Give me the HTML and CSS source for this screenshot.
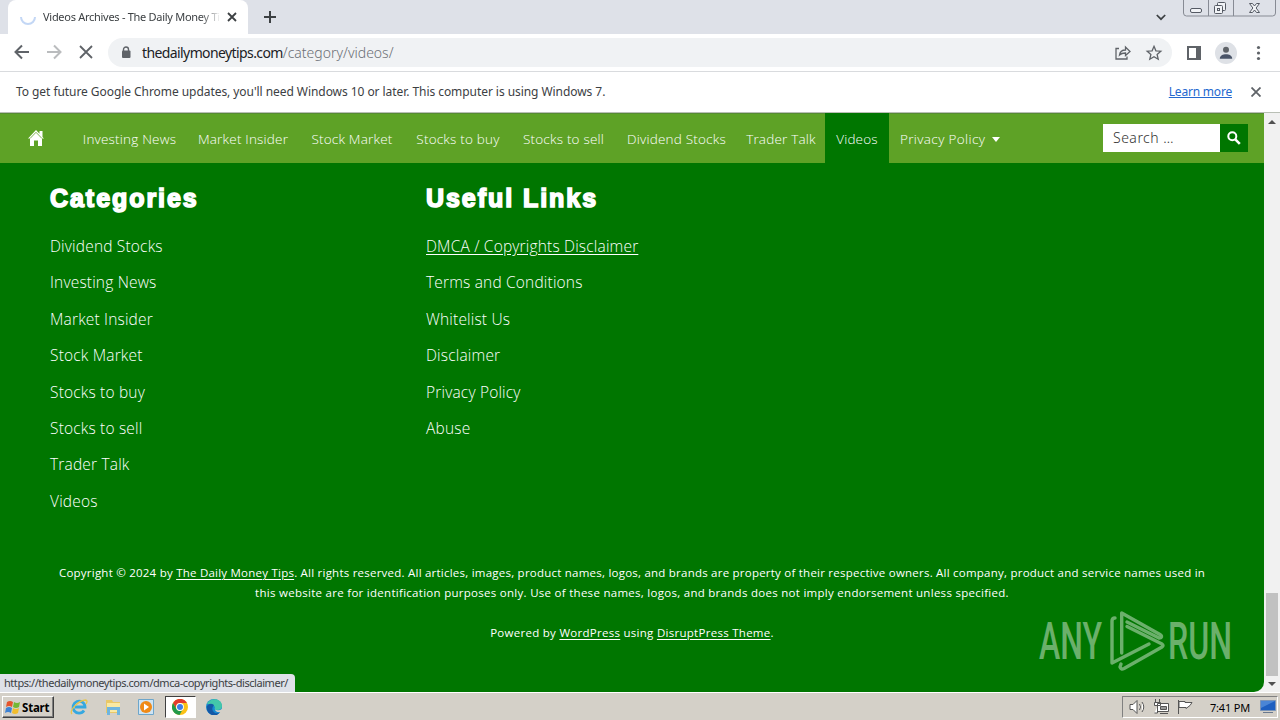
FILE: index.html
```html
<!DOCTYPE html>
<html lang="en">
<head>
    <meta charset="UTF-8">
    <meta name="viewport" content="width=device-width, initial-scale=1.0">
    <title>Videos Archives - The Daily Money Tips</title>
    <link rel="stylesheet" href="styles.css">
</head>
<body>
    <div class="tabstrip">
        <div class="tab">
            <svg class="spinner" width="16" height="16" viewBox="0 0 16 16"><path d="M1 8a7 7 0 0 0 14 0" fill="none" stroke="#c3d7f5" stroke-width="2"/></svg>
            <span class="tab-title">Videos Archives - The Daily Money Ti</span>
            <svg class="tab-close" width="10" height="10" viewBox="0 0 10 10"><path d="M1 1l8 8M9 1l-8 8" stroke="#3c4043" stroke-width="1.8"/></svg>
        </div>
        <svg class="new-tab" width="12" height="12" viewBox="0 0 12 12"><path d="M6 0v12M0 6h12" stroke="#3c4043" stroke-width="2"/></svg>
        <svg class="tab-search" width="10" height="7" viewBox="0 0 10 7"><path d="M.8 1L5 5.2 9.2 1" fill="none" stroke="#3c4043" stroke-width="1.7"/></svg>
        <svg class="window-buttons" width="94" height="17" viewBox="0 0 94 17">
            <path d="M.5 0v13a3 3 0 0 0 3 3h86a3 3 0 0 0 3-3V0M25.5 0v16M50.5 0v16" fill="none" stroke="#878b94"/>
            <g fill="#f1f3f6" stroke="#555a64">
                <rect x="7.5" y="8.5" width="11" height="4" rx="1.5"/>
                <rect x="34.5" y="2.5" width="8" height="8" rx="1"/>
                <rect x="31.5" y="5.5" width="8" height="8" rx="1"/>
                <rect x="34.5" y="8.5" width="2" height="2"/>
                <path d="M66.5 3.5h3l2 2.500 2-2.500h3l-3.400 4.500 3.400 4.500h-3l-2-2.500-2 2.500h-3l3.400-4.500z"/>
            </g>
        </svg>
    </div>

    <div class="toolbar">
        <svg width="100" height="36" viewBox="0 0 100 36" fill="none" stroke-width="2">
            <path d="M29 17H16M22 10.500L15.500 17l6.500 6.500" stroke="#5f6368"/>
            <path d="M47 17h13M54 10.500l6.500 6.500-6.500 6.500" stroke="#babcbe"/>
            <path d="M80 11l12 12M92 11L80 23" stroke="#5f6368" stroke-width="1.8"/>
        </svg>
        <div class="address">
            <svg class="lock" width="10" height="13" viewBox="0 0 10 13"><path d="M2.500 5V3.500a2.500 2.500 0 0 1 5 0V5" fill="none" stroke="#5f6368" stroke-width="1.4"/><rect x="1" y="4.500" width="8.500" height="7.500" rx="1" fill="#5f6368"/></svg>
            <span class="url"><b>thedailymoneytips.com</b>/category/videos/</span>
            <svg class="address-icons" width="52" height="20" viewBox="0 0 52 20" fill="none" stroke="#5f6368" stroke-width="1.3">
                <path d="M5 5.500H2V16h11v-2.500M5.500 12c.6-4 3-5 6-5V4l4.500 4.500-4.500 4V10c-3 0-4.500.5-6 2z"/>
                <path d="M40 3.300l1.900 4.500 4.900.4-3.700 3.200 1.100 4.800-4.200-2.500-4.200 2.500 1.100-4.800-3.700-3.200 4.900-.4z"/>
            </svg>
        </div>
        <svg class="toolbar-icons" width="84" height="24" viewBox="0 0 84 24" fill="#5f6368">
            <path d="M1 5h14v14H1zM3 7v10h7V7z" fill-rule="evenodd"/>
            <circle cx="40" cy="12" r="11" fill="#dee1e6"/><circle cx="40" cy="8.800" r="3"/><path d="M33.800 17.700c0-5.800 12.400-5.800 12.400 0z" fill="#4a5468"/>
            <circle cx="72.500" cy="6.500" r="1.600"/><circle cx="72.500" cy="12" r="1.600"/><circle cx="72.500" cy="17.500" r="1.600"/>
        </svg>
    </div>

    <div class="infobar">
        <span class="infobar-text">To get future Google Chrome updates, you'll need Windows 10 or later. This computer is using Windows 7.</span>
        <a class="learn-more">Learn more</a>
        <svg width="10" height="10" viewBox="0 0 10 10"><path d="M.5.5l9 9M9.500.5l-9 9" stroke="#5f6368" stroke-width="1.8"/></svg>
    </div>

    <div class="viewport">
        <div class="page">
            <div class="navbar">
                <svg class="home" width="18" height="18" viewBox="0 0 18 18"><path d="M1 9.500L9 1l3.500 3.700V2h3v6l1.500 1.500h-2V17h-4v-5.500H7V17H3V9.500z" fill="#fff"/><path d="M3 9.500l6-6.200 6 6.200" fill="none" stroke="#5ea226" stroke-width=".8"/></svg>
                <ul class="menu">
                    <li>Investing News</li>
                    <li>Market Insider</li>
                    <li>Stock Market</li>
                    <li>Stocks to buy</li>
                    <li>Stocks to sell</li>
                    <li>Dividend Stocks</li>
                    <li>Trader Talk</li>
                    <li class="active">Videos</li>
                    <li class="has-children">Privacy Policy</li>
                </ul>
                <div class="search">
                    <span class="search-field">Search …</span>
                    <span class="search-button"><svg width="14" height="14" viewBox="0 0 14 14"><circle cx="5.300" cy="5.300" r="4" fill="none" stroke="#fff" stroke-width="2"/><path d="M8.300 8.300l4.500 4.500" stroke="#fff" stroke-width="2.600"/></svg></span>
                </div>
            </div>

            <div class="widgets">
                <div class="widget">
                    <h3>Categories</h3>
                    <ul>
                        <li>Dividend Stocks</li>
                        <li>Investing News</li>
                        <li>Market Insider</li>
                        <li>Stock Market</li>
                        <li>Stocks to buy</li>
                        <li>Stocks to sell</li>
                        <li>Trader Talk</li>
                        <li>Videos</li>
                    </ul>
                </div>
                <div class="widget">
                    <h3>Useful Links</h3>
                    <ul>
                        <li><u>DMCA / Copyrights Disclaimer</u></li>
                        <li>Terms and Conditions</li>
                        <li>Whitelist Us</li>
                        <li>Disclaimer</li>
                        <li>Privacy Policy</li>
                        <li>Abuse</li>
                    </ul>
                </div>
            </div>

            <div class="copyright">
                <p class="line-one">Copyright © 2024 by <u>The Daily Money Tips</u>. All rights reserved. All articles, images, product names, logos, and brands are property of their respective owners. All company, product and service names used in</p>
                <p>this website are for identification purposes only. Use of these names, logos, and brands does not imply endorsement unless specified.</p>
                <p class="powered">Powered by <u>WordPress</u> using <u>DisruptPress Theme</u>.</p>
            </div>
        </div>

        <div class="scrollbar">
            <svg width="8" height="4" viewBox="0 0 8 4"><path d="M0 4l4-4 4 4z" fill="#505050"/></svg>
            <div class="thumb"></div>
            <svg width="8" height="4" viewBox="0 0 8 4"><path d="M0 0l4 4 4-4z" fill="#505050"/></svg>
        </div>

        <div class="status">https://thedailymoneytips.com/dmca-copyrights-disclaimer/</div>

        <svg class="watermark" width="210" height="64" viewBox="0 0 210 64">
            <g class="watermark-text">
                <text x="2" y="50" textLength="63" lengthAdjust="spacingAndGlyphs">ANY</text>
                <text x="131" y="50" textLength="64" lengthAdjust="spacingAndGlyphs">RUN</text>
            </g>
            <g fill="none" stroke="#6bb06b" stroke-width="3.4" stroke-linejoin="round" stroke-linecap="round">
                <path d="M84.700 44V4L123 25.500q2.500 1.500 1 3l-2 .5L90 13"/>
                <path d="M78 9q-3 0-3 3V54l37-19"/>
                <path d="M84 55l-1 3q1 3 4 1.500L125 38q2-1.500 0-3L90 17.500"/>
            </g>
        </svg>
    </div>

    <div class="taskbar">
        <div class="start">
            <svg width="16" height="15" viewBox="0 0 16 15"><path d="M2 2q3-2 6 0L7 7Q4 5 1 7z" fill="#e5542b"/><path d="M9 2q3 2 6 0l-1 5q-3 2-6 0z" fill="#74b834"/><path d="M1 8q3-2 6 0l-1 5q-3-2-6 0z" fill="#3d82d4"/><path d="M8 8q3 2 6 0l-1 5q-3 2-6 0z" fill="#f2bd2c"/></svg>
            Start
        </div>
        <div class="pinned">
            <span><svg width="18" height="18" viewBox="0 0 18 18" fill="none"><path d="M14 12.500A6 6 0 1 1 15 9H5" stroke="#35a8e0" stroke-width="2.800"/><path d="M2 16C-1 13 8 2 16 2q2 1 0 4" stroke="#e8c54a" stroke-width="1.300"/></svg></span>
            <span><svg width="18" height="18" viewBox="0 0 18 18"><path d="M2 2h6l1 2h7v11H2z" fill="#e9c868"/><path d="M3 5h13v9H3z" fill="#f9e9a3"/><path d="M3 17V9h13v8h-3v-5H6v5z" fill="#6fb5df"/></svg></span>
            <span><svg width="18" height="18" viewBox="0 0 18 18"><path d="M1.500 1.500h15v15h-15z" fill="#cfe4f3" stroke="#6da6cb"/><circle cx="9" cy="9" r="6" fill="#f08a17"/><path d="M7 5.500l5 3.500-5 3.500z" fill="#fff"/></svg></span>
            <span class="running"><svg width="16" height="16" viewBox="0 0 16 16"><circle cx="8" cy="8" r="8" fill="#fbc116"/><path d="M1 4a8 8 0 0 1 14 0H8a4 4 0 0 0-3.500 6z" fill="#e33b2e"/><path d="M1 4a8 8 0 0 0 6.500 12L11 10q-3 4-6.500 0z" fill="#229a4b"/><circle cx="8" cy="8" r="3.900" fill="#fff"/><circle cx="8" cy="8" r="3" fill="#3e7de8"/></svg></span>
            <span><svg width="16" height="16" viewBox="0 0 16 16"><circle cx="8" cy="8" r="8" fill="#1689d1"/><path d="M1 5C4-2 16-1 16 7q0 4-5 4-3 0-2-2Q9 5 1 5" fill="#43c7aa"/><path d="M1 7Q4 3 8 6q-4 5 1 8 3 1 5-1-4 6-10 2Q0 12 1 7" fill="#1458a6"/><path d="M9 9q-1 3 5 2l2-1v3q-8 1-7-4" fill="#d4d0c8"/></svg></span>
        </div>
        <div class="tray">
            <svg width="70" height="18" viewBox="0 0 70 18" fill="#fff" stroke="#555">
                <path d="M2 6.500h3l4-4v13l-4-4H2zM11.500 6q2 3 0 6M14 4q3.500 5 0 10"/>
                <path d="M29.500 5.500h11v8h-11zM32 15.500h8M27.500 1v4M31.500 1v4M26.500 4.500h6v3h-6zM29.500 8v7h-3"/>
                <path d="M32.500 8.500h6v3h-6z" fill="#999"/>
                <path d="M50.500 2v14M51 3.500h6v1h7l-2 3-4 3v-1h-7z"/>
            </svg>
            <span class="clock">7:41 PM</span>
            <svg width="16" height="14" viewBox="0 0 16 14"><path d="M.5.5h15v10H.5z" fill="#1e5fc0" stroke="#7a94b8"/><path d="M1 1h14L1 8z" fill="#4a85d5"/><path d="M3 12h10v1H3z" fill="#69788e"/></svg>
        </div>
    </div>
</body>
</html>
```
FILE: styles.css
```css
* { box-sizing: border-box; }
body { margin: 0; width: 1280px; height: 720px; overflow: hidden; display: flex; flex-direction: column; background: #fff; font-family: "Noto Sans", "Open Sans", sans-serif; font-size: 12px; color: #3c4043; white-space: nowrap; }
ul, p, h3 { margin: 0; padding: 0; list-style: none; }
svg { flex: none; display: block; }

/* browser */
.tabstrip { height: 34px; flex: none; display: flex; align-items: center; background: #dee1e8; }
.tab { width: 240px; height: 34px; margin-left: 8px; padding: 0 11px 0 12px; display: flex; align-items: center; background: #fff; border-radius: 8px 8px 0 0; }
.tab-title { width: 176px; margin-left: 7px; padding-bottom: 2px; font-size: 11px; letter-spacing: -0.28px; -webkit-mask-image: linear-gradient(90deg, #000 158px, transparent 178px); mask-image: linear-gradient(90deg, #000 158px, transparent 178px); }
.tab-close { margin-left: auto; }
.new-tab { margin-left: 16px; }
.tab-search { margin-left: auto; margin-right: 17px; }
.window-buttons { align-self: flex-start; margin-right: 3px; }
.toolbar { height: 38px; flex: none; display: flex; align-items: center; border-bottom: 1px solid #d9dbde; }
.address { width: 1064px; height: 29px; margin-left: 8px; padding: 0 6px 0 13px; display: flex; align-items: center; border-radius: 15px; background: #f0f2f4; }
.url { margin-left: 11px; font-size: 14px; color: #6b6f74; font-weight: 300; }
.url b { font-weight: 400; color: #202124; letter-spacing: -0.6px; }
.address-icons { margin-left: auto; }
.toolbar-icons { margin-left: 14px; }
.infobar { height: 41px; flex: none; padding: 0 19px 0 16px; display: flex; align-items: center; border-bottom: 1px solid #b9bfb5; }
.infobar-text { padding-bottom: 2px; font-size: 12px; letter-spacing: -0.06px; }
.learn-more { margin-left: auto; margin-right: 19px; padding-bottom: 2px; font-size: 12px; letter-spacing: -0.2px; color: #2468cf; text-decoration: underline; }

/* site */
.viewport { height: 579px; flex: none; display: flex; position: relative; background: #f1f1f1; }
.page { width: 1264px; background: #007600; border-radius: 0 0 10px 0; color: #fff; font-family: "Open Sans", "Noto Sans", sans-serif; font-weight: 300; }
.navbar { height: 50px; padding: 0 16px 0 27px; display: flex; align-items: center; background: #5ea226; box-shadow: inset 0 1px #568b32; }
.menu { height: 50px; margin-left: 27px; display: grid; grid-template-columns: 115px 112px 106px 106px 105px 121px 88px 64px 121px; line-height: 52px; text-align: center; font-size: 13.5px; letter-spacing: 0.2px; }
.menu .active { background: #007600; }
.has-children { display: flex; align-items: center; padding-left: 11px; letter-spacing: 0.36px; }
.has-children::after { content: ""; margin-left: 7px; border: 4px solid transparent; border-top: 5px solid #fff; border-bottom: 0; }
.search { margin-left: auto; display: flex; height: 28px; }
.search-field { width: 117px; padding-left: 10px; background: #fff; color: #333; font: 300 14px/28px "Noto Sans", sans-serif; letter-spacing: 0.5px; }
.search-button { width: 28px; display: grid; place-items: center; background: #007600; }
.widgets { padding: 17px 50px 0; display: grid; grid-template-columns: 376px 376px; }
.widget h3 { font-family: "Liberation Sans", Arial, sans-serif; font-size: 25px; line-height: 36px; font-weight: 700; -webkit-text-stroke: 1.6px #fff; letter-spacing: 1.95px; }
.widget ul { margin-top: 12px; }
.widget li { font-size: 15.5px; line-height: 36.4px; letter-spacing: 0.18px; }
.widget u, .copyright u { text-underline-offset: 2px; }
.copyright { margin-top: 44px; display: flex; flex-direction: column; align-items: center; font-size: 11.5px; line-height: 20px; font-weight: 400; letter-spacing: 0.28px; }
.line-one { letter-spacing: 0.23px; }
.powered { margin-top: 20px; }

.scrollbar { width: 16px; padding: 7px 0 6px; display: flex; flex-direction: column; align-items: center; background: #f1f1f1; }
.thumb { width: 12px; height: 83px; margin-top: auto; margin-bottom: 6px; background: #c1c1c1; }
.status { position: absolute; left: 0; bottom: 0; width: 295px; height: 18px; padding-left: 4px; background: #dee1e8; border-radius: 0 4px 0 0; font-size: 11px; line-height: 18px; letter-spacing: -0.45px; }
.watermark { position: absolute; left: 1037px; top: 496px; overflow: visible; }
.watermark-text { fill: #6bb06b; font-family: Roboto, sans-serif; font-size: 51px; font-weight: 500; }

/* taskbar */
.taskbar { height: 28px; flex: none; padding: 3px 2px 2px; display: flex; align-items: center; background: #d4d0c8; border-top: 1px solid #fff; color: #000; }
.start { width: 52px; height: 22px; padding-left: 2px; display: flex; align-items: center; gap: 1px; font-size: 11.5px; font-weight: 700; letter-spacing: -0.2px; border: 1px solid; border-color: #fff #404040 #404040 #fff; box-shadow: inset -1px -1px #808080; }
.pinned { margin-left: 8px; display: flex; }
.pinned span { width: 33.8px; height: 22px; display: grid; place-items: center; }
.pinned .running { width: 31px; margin: 0 1.4px; background: #fff; border: 1px solid; border-color: #404040 #fff #fff #404040; }
.tray { width: 156px; height: 22px; margin-left: auto; padding: 0 1px 0 5px; display: flex; align-items: center; border: 1px solid; border-color: #808080 #fff #fff #808080; }
.clock { margin-left: 12px; margin-right: auto; font-size: 11px; letter-spacing: -0.2px; }
```
